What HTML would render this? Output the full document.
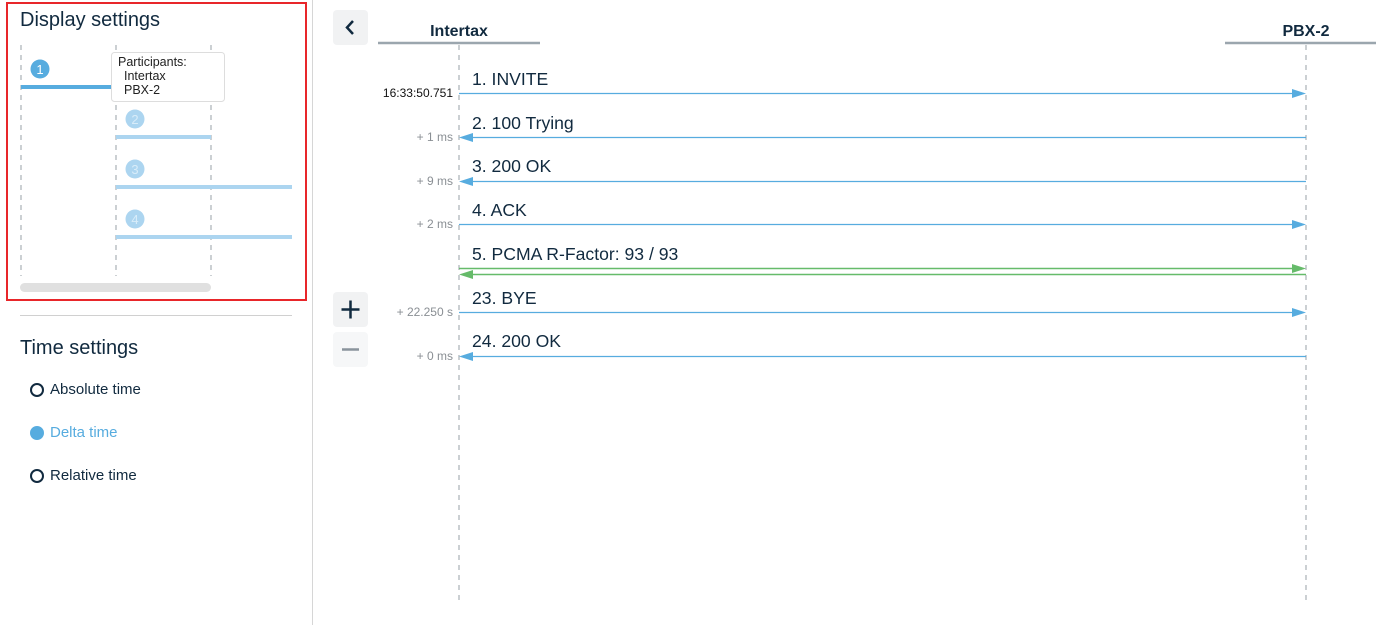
<!DOCTYPE html>
<html><head><meta charset="utf-8"><style>
body{margin:0;width:1397px;height:625px;overflow:hidden;background:#fff;font-family:"Liberation Sans",sans-serif;position:relative}
.a{position:absolute}
.btn{position:absolute;left:333px;width:35px;height:35px;background:#f1f2f3;border-radius:4px}
.r{position:absolute;left:30px;font-size:15px;color:#112a3f;display:flex;align-items:center}
.r i{display:inline-block;width:10px;height:10px;border:2.5px solid #112a3f;border-radius:50%;margin-right:6px}
</style></head><body>
<div class="a" style="left:6px;top:2px;width:297px;height:295px;border:2px solid #e8262a"></div>
<div class="a" style="left:20px;top:9px;font-size:20px;color:#112a3f">Display settings</div>
<svg class="a" style="left:0;top:0" width="312" height="300">
<g stroke="#a9b0b6" stroke-width="1.2" stroke-dasharray="5,5">
<line x1="21" y1="45" x2="21" y2="276"/><line x1="116" y1="45" x2="116" y2="276"/><line x1="211" y1="45" x2="211" y2="276"/></g>
<line x1="21" y1="87" x2="116" y2="87" stroke="#57acdf" stroke-width="4"/>
<circle cx="40" cy="69" r="9.5" fill="#57acdf"/><text x="40" y="74" font-size="13" fill="#fff" text-anchor="middle" font-family="Liberation Sans">1</text>
<g fill="#acd5f0"><circle cx="135" cy="119" r="9.5"/><circle cx="135" cy="169" r="9.5"/><circle cx="135" cy="219" r="9.5"/></g>
<g fill="#d8ecf9" font-size="13" text-anchor="middle" font-family="Liberation Sans"><text x="135" y="124">2</text><text x="135" y="174">3</text><text x="135" y="224">4</text></g>
<g stroke="#acd5f0" stroke-width="4"><line x1="116" y1="137" x2="211" y2="137"/><line x1="116" y1="187" x2="292" y2="187"/><line x1="116" y1="237" x2="292" y2="237"/></g>
<rect x="111.5" y="52.5" width="113" height="49" rx="3" fill="#fff" stroke="#ddd"/>
<g font-size="12.5" fill="#222" font-family="Liberation Sans"><text x="118" y="66">Participants:</text><text x="124" y="80">Intertax</text><text x="124" y="94">PBX-2</text></g>
<rect x="20" y="283" width="191" height="9" rx="4.5" fill="#e0e0e0"/>
</svg>
<div class="a" style="left:312px;top:0;width:1px;height:625px;background:#d6d6d6"></div>
<div class="a" style="left:20px;top:315px;width:272px;height:1px;background:#d0d0d0"></div>
<div class="a" style="left:20px;top:337px;font-size:20px;color:#112a3f">Time settings</div>
<div class="r" style="top:381px"><i></i>Absolute time</div>
<div class="r" style="top:424px;color:#57acdf"><i style="background:#57acdf;border-color:#57acdf"></i>Delta time</div>
<div class="r" style="top:467px"><i></i>Relative time</div>
<div class="btn" style="top:10px"><svg width="35" height="35"><path d="M20 11 L14 17.5 L20 24" fill="none" stroke="#112a3f" stroke-width="2.5"/></svg></div>
<div class="btn" style="top:292px"><svg width="35" height="35"><path d="M17.5 8.5V26.5M8.5 17.5H26.5" stroke="#112a3f" stroke-width="2.5"/></svg></div>
<div class="btn" style="top:332px;background:#f6f7f8"><svg width="35" height="35"><path d="M9 17.5H26" stroke="#8a949c" stroke-width="2.5"/></svg></div>
<svg class="a" style="left:0;top:0" width="1397" height="625" font-family="Liberation Sans">
<text x="459" y="36" font-size="16" font-weight="bold" fill="#112a3f" text-anchor="middle">Intertax</text>
<text x="1306" y="36" font-size="16" font-weight="bold" fill="#112a3f" text-anchor="middle">PBX-2</text>
<line x1="378" y1="43" x2="540" y2="43" stroke="#9ba6ae" stroke-width="2.5"/>
<line x1="1225" y1="43" x2="1376" y2="43" stroke="#9ba6ae" stroke-width="2.5"/>
<g stroke="#a9b0b6" stroke-width="1.2" stroke-dasharray="5,5"><line x1="459" y1="45" x2="459" y2="600"/><line x1="1306" y1="45" x2="1306" y2="600"/></g>
<g stroke="#57acdf" stroke-width="1.2">
<line x1="459" y1="93.5" x2="1300" y2="93.5"/><line x1="465" y1="137.5" x2="1306" y2="137.5"/><line x1="465" y1="181.5" x2="1306" y2="181.5"/>
<line x1="459" y1="224.5" x2="1300" y2="224.5"/><line x1="459" y1="312.5" x2="1300" y2="312.5"/><line x1="465" y1="356.5" x2="1306" y2="356.5"/></g>
<g stroke="#66bb6a" stroke-width="1.4"><line x1="459" y1="268.5" x2="1300" y2="268.5"/><line x1="465" y1="274.5" x2="1306" y2="274.5"/></g>
<g fill="#57acdf"><path d="M1292 89L1306 93.5L1292 98Z"/><path d="M1292 220L1306 224.5L1292 229Z"/><path d="M1292 308L1306 312.5L1292 317Z"/>
<path d="M473 133L459 137.5L473 142Z"/><path d="M473 177L459 181.5L473 186Z"/><path d="M473 352L459 356.5L473 361Z"/></g>
<g fill="#66bb6a"><path d="M1292 264L1306 268.5L1292 273Z"/><path d="M473 270L459 274.5L473 279Z"/></g>
<g font-size="17.6" fill="#112a3f"><text x="472" y="85">1. INVITE</text><text x="472" y="129">2. 100 Trying</text><text x="472" y="172">3. 200 OK</text><text x="472" y="216">4. ACK</text><text x="472" y="260">5. PCMA R-Factor: 93 / 93</text><text x="472" y="304">23. BYE</text><text x="472" y="347">24. 200 OK</text></g>
<text x="453" y="97" font-size="12" fill="#111" text-anchor="end">16:33:50.751</text>
<g font-size="12" fill="#8a8f94" text-anchor="end"><text x="453" y="141">+ 1 ms</text><text x="453" y="185">+ 9 ms</text><text x="453" y="228">+ 2 ms</text><text x="453" y="316">+ 22.250 s</text><text x="453" y="360">+ 0 ms</text></g>
</svg>
</body></html>
